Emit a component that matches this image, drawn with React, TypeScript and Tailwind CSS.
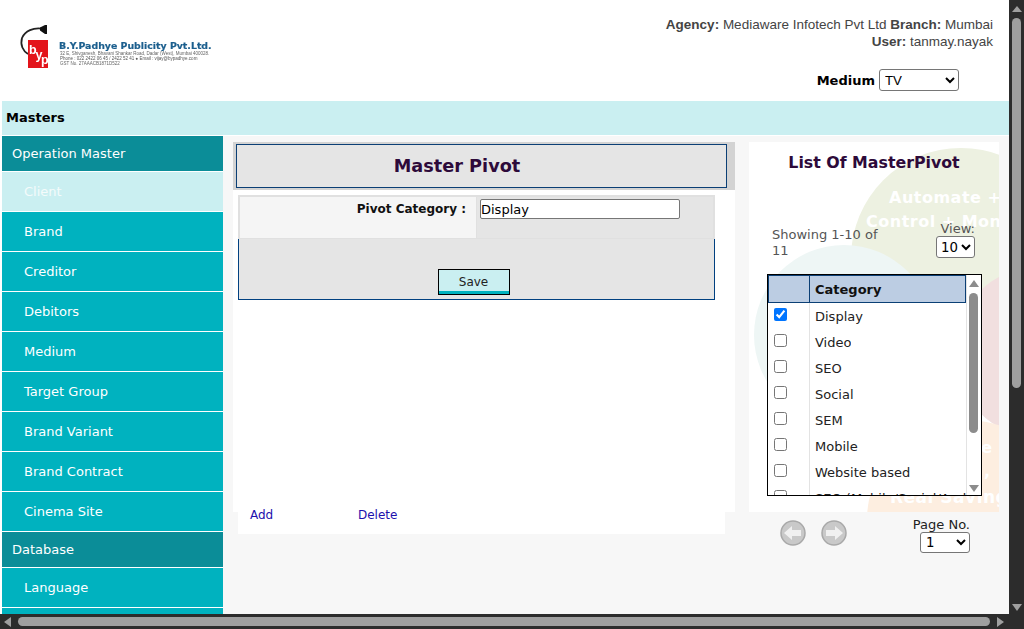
import React from 'react';

const verdana = '[font-family:Verdana,"DejaVu_Sans",sans-serif]';

const operationItems = [
  'Brand',
  'Creditor',
  'Debitors',
  'Medium',
  'Target Group',
  'Brand Variant',
  'Brand Contract',
  'Cinema Site',
];

const categories = ['Display', 'Video', 'SEO', 'Social', 'SEM', 'Mobile', 'Website based', 'SEO (Mobile/Social/Android)'];

const Logo = () => (
  <svg width="194" height="56" viewBox="0 0 194 56" className="block blur-[0.4px]">
    <path d="M25 5 C14 3 6 7 3 14 C1 21 4 27 9 30" fill="none" stroke="#222" strokeWidth="1.8" />
    <path d="M21 3.5 L26 1 L28 1 L28 10 L26 10 L21 6.5 Z" fill="#111" />
    <rect x="9" y="16" width="20" height="28" fill="#e3141b" />
    <text fontSize="12.5" fontWeight="700" fill="#fff" fontFamily="Liberation Sans">
      <tspan x="10" y="30">b</tspan>
      <tspan x="16.5" y="35">y</tspan>
      <tspan x="22" y="40">p</tspan>
    </text>
    <text x="40" y="25" fontSize="9.4" fontWeight="700" fill="#1c5f8e" stroke="#1c5f8e" strokeWidth="0.2" fontFamily="DejaVu Sans">B.Y.Padhye Publicity Pvt.Ltd.</text>
    <text x="41" y="31" fontSize="4.5" fill="#666" fontFamily="Liberation Sans">32 E, Shivganesh, Bhavani Shankar Road, Dadar (West), Mumbai 400028.</text>
    <text x="41" y="36" fontSize="4.5" fill="#555" fontFamily="Liberation Sans">Phone : 022 2422 06 45 / 2422 52 41 ● Email : vijay@bypadhye.com</text>
    <text x="41" y="41" fontSize="4.5" fill="#666" fontFamily="Liberation Sans">GST No. 27AAACB1871D522</text>
  </svg>
);

const NavButton = ({ dir }: { dir: 'left' | 'right' }) => (
  <svg width="26" height="26" viewBox="0 0 26 26">
    <circle cx="13" cy="13" r="12" fill="#c9c9c9" stroke="#a9a9a9" strokeWidth="1.5" />
    <path
      d={dir === 'left' ? 'M4 13 L12 6 V10 H21 V16 H12 V20 Z' : 'M22 13 L14 6 V10 H5 V16 H14 V20 Z'}
      fill="#f0f0f0"
    />
  </svg>
);

export default function App() {
  return (
    <div className="flex h-[629px] w-[1024px] flex-col overflow-hidden bg-[#2c2c2c]">
      <div className="flex h-[614px] w-[1024px]">
        <div className={`h-[614px] w-[1009px] overflow-hidden bg-white pl-[2px] text-[13px] ${verdana}`}>
          {/* header */}
          <div className="flex h-[101px]">
            <div className="pl-[17px] pt-[24px]">
              <Logo />
            </div>
            <div className="ml-auto pr-[16px] pt-[16px] text-right [font-family:'Liberation_Sans',Arial,sans-serif] text-[13.5px] leading-[17px] text-[#444]">
              <div>
                <b>Agency:</b> Mediaware Infotech Pvt Ltd <b>Branch:</b> Mumbai
              </div>
              <div>
                <b>User:</b> tanmay.nayak
              </div>
              <div className="mt-[19px] mr-[34px] flex items-center justify-end gap-[4px]">
                <span className={`text-[13px] font-bold text-black ${verdana}`}>Medium</span>
                <select className="h-[22px] w-[80px] rounded-[3px] border border-[#767676] bg-white pl-[1px] text-[13.3px] leading-none text-black" defaultValue="TV">
                  <option>TV</option>
                </select>
              </div>
            </div>
          </div>

          <div className="flex h-[34px] items-center bg-[#caeff1] pl-[4px] font-bold text-black">Masters</div>

          <div className="mt-[1px] flex h-[478px]">
            {/* sidebar */}
            <div className="w-[221px] shrink-0 text-[13px] text-white">
              <div className="flex h-[36px] items-center border-b border-white bg-[#0b8d98] pl-[10px]">Operation Master</div>
              <div className="flex h-[40px] items-center border-b border-white bg-[#caeff1] pl-[22px] font-normal text-[#f4fbfb]">Client</div>
              {operationItems.map((item) => (
                <div key={item} className="flex h-[40px] items-center border-b border-white bg-[#00b2bf] pl-[22px]">
                  {item}
                </div>
              ))}
              <div className="flex h-[36px] items-center border-b border-white bg-[#0b8d98] pl-[10px]">Database</div>
              <div className="flex h-[40px] items-center border-b border-white bg-[#00b2bf] pl-[22px]">Language</div>
              <div className="h-[40px] bg-[#00b2bf]" />
            </div>

            {/* content */}
            <div className="flex min-w-0 flex-1 bg-[#f7f7f7] pt-[6px]">
              <div className="ml-[10px] w-[502px] shrink-0">
                <div className="flex h-[48px] items-start bg-[#d3d3d3] pl-[3px] pt-[2px]">
                  <div className="flex h-[44px] w-[491px] items-center justify-center border border-[#0b3f75] bg-[#e5e5e5] pr-[49px] text-[17.7px] font-bold text-[#2d0a3a]">
                    Master Pivot
                  </div>
                </div>
                <div className="h-[322px] bg-white pl-[5px] pt-[5px]">
                  <div className="w-[477px]">
                    <div className="flex h-[44px] border-x-2 border-y-2 border-b-[1px] border-[#e0e0e0] border-r-0">
                      <div className="w-[236px] bg-[#f5f5f5] pr-[10px] pt-[4px] text-right text-[12px] font-bold leading-[16px] text-[#111]">Pivot Category :</div>
                      <div className="flex-1 border-l border-r-2 border-[#e0e0e0] bg-[#e5e5e5] pl-[3px] pt-[2px]">
                        <input
                          readOnly
                          value="Display"
                          className="h-[20px] w-[200px] rounded-[2px] border border-[#767676] bg-white text-[13px] text-black outline-none"
                        />
                      </div>
                    </div>
                    <div className="flex h-[61px] items-end justify-center border border-t-0 border-[#004080] bg-[#e5e5e5] pb-[4px] pr-[6px]">
                      <button className="h-[26px] w-[72px] border border-black bg-[#caeff1] pb-[1px] text-[12px] leading-[20px] text-[#222] shadow-[inset_0_-3px_0_#00b2bf]">
                        Save
                      </button>
                    </div>
                  </div>
                </div>
                <div className="ml-[5px] flex h-[22px] w-[487px] items-start bg-white text-[12px] text-[#1c10ad]">
                  <div className="-mt-[5px] flex h-[16px] items-center">
                    <a className="ml-[12px] w-[108px]">Add</a>
                    <a>Delete</a>
                  </div>
                </div>
              </div>

              {/* list panel */}
              <div className="ml-[14px] w-[250px] shrink-0">
                <div className="relative h-[370px] overflow-hidden bg-white">
                  <div className="absolute left-[102px] top-[6px] h-[220px] w-[220px] rounded-full bg-[#edf1e1]" />
                  <div className="absolute left-[5px] top-[103px] h-[180px] w-[180px] rounded-full bg-[#eef6f5]" />
                  <div className="absolute left-[205px] top-[125px] h-[170px] w-[170px] rounded-full bg-[#f1dfdf]" />
                  <div className="absolute left-[118px] top-[278px] h-[200px] w-[200px] rounded-full bg-[#fdeee0]" />
                  <div className="absolute left-[140px] top-[44px] whitespace-nowrap text-[16px] font-bold leading-[24px] tracking-[0.5px] text-white">Automate +</div>
                  <div className="absolute left-[117px] top-[68px] whitespace-nowrap text-[16px] font-bold leading-[24px] tracking-[0.5px] text-white">Control + Monitor</div>
                  <div className="absolute right-[7px] top-[294px] text-[16px] font-bold leading-[24px] text-white">e</div>
                  <div className="absolute right-[9px] top-[318px] text-[16px] font-bold leading-[24px] text-white">,</div>
                  <div className="absolute left-[141px] top-[343px] whitespace-nowrap text-[17px] font-bold leading-[24px] tracking-[0.5px] text-white">Real Saving</div>

                  <div className="relative">
                    <div className="pt-[10px] text-center text-[15.8px] font-bold leading-[22px] text-[#2d0a3a]">List Of MasterPivot</div>
                    <div className="mt-[30px] flex h-[58px] pl-[23px] text-[13px] leading-[16px] text-[#555]">
                      <div className="mt-[23px] w-[120px]">Showing 1-10 of 11</div>
                      <div className="ml-[43px] mt-[18px] flex w-[40px] flex-col items-end">
                        <span className="leading-[13px]">View:</span>
                        <select className="mt-[1px] h-[22px] w-[39px] rounded-[3px] border border-[#767676] bg-white text-[13.3px] text-black" defaultValue="10">
                          <option>10</option>
                        </select>
                      </div>
                    </div>
                    <div className="ml-[18px] mt-[12px] flex h-[222px] w-[215px] overflow-hidden border border-black bg-white">
                      <div className="h-full w-[198px] shrink-0">
                        <div className="flex h-[28px] border border-[#0b3f75] bg-[#bccde3] font-bold text-[#111]">
                          <div className="w-[41px] border-r border-[#0b3f75]" />
                          <div className="flex items-center pl-[5px] pt-[1px]">Category</div>
                        </div>
                        {categories.map((category, index) => (
                          <div key={category} className="flex h-[26px]">
                            <div className="w-[42px] shrink-0 border-r border-[#e3e3e3] pl-[6px] pt-[5px]">
                              <input type="checkbox" readOnly checked={index === 0} className="block h-[13px] w-[13px]" />
                            </div>
                            <div className="flex items-center overflow-hidden whitespace-nowrap pl-[5px] pt-[2px] text-[13px] text-[#222]">{category}</div>
                          </div>
                        ))}
                      </div>
                      <div className="flex h-full w-[15px] flex-col items-center border-l border-[#e3e3e3] pr-[1px] pt-[5px]">
                        <div className="h-0 w-0 border-x-[5px] border-b-[7px] border-x-transparent border-b-[#8c8c8c]" />
                        <div className="mt-[6px] h-[140px] w-[9px] rounded-full bg-[#8c8c8c]" />
                        <div className="mt-auto mb-[3px] h-0 w-0 border-x-[5px] border-t-[7px] border-x-transparent border-t-[#8c8c8c]" />
                      </div>
                    </div>
                  </div>
                </div>
                <div className="flex pl-[31px] pt-[5px] text-[13px] text-[#222]">
                  <div className="flex gap-[15px] pt-[3px]">
                    <NavButton dir="left" />
                    <NavButton dir="right" />
                  </div>
                  <div className="ml-[65px] flex w-[58px] flex-col items-end leading-[15px]">
                    <span>Page No.</span>
                    <select className="h-[21px] w-[50px] rounded-[3px] border border-[#767676] bg-white pl-[1px] text-[13.3px] text-black" defaultValue="1">
                      <option>1</option>
                    </select>
                  </div>
                </div>
              </div>
            </div>
          </div>
        </div>

        {/* vertical scrollbar */}
        <div className="flex h-[614px] w-[15px] flex-col items-center pt-[6px]">
          <div className="h-0 w-0 border-x-[5px] border-b-[6px] border-x-transparent border-b-[#9f9f9f]" />
          <div className="mt-[6px] h-[370px] w-[9px] rounded-full bg-[#9f9f9f]" />
          <div className="mt-auto mb-[3px] h-0 w-0 border-x-[5px] border-t-[7px] border-x-transparent border-t-[#9f9f9f]" />
        </div>
      </div>

      {/* horizontal scrollbar */}
      <div className="flex h-[15px] w-[1024px] items-center pl-[4px]">
        <div className="h-0 w-0 border-y-[5px] border-r-[7px] border-y-transparent border-r-[#9f9f9f]" />
        <div className="ml-[7px] h-[9px] w-[972px] rounded-full bg-[#9f9f9f]" />
        <div className="ml-[7px] h-0 w-0 border-y-[5px] border-l-[7px] border-y-transparent border-l-[#9f9f9f]" />
      </div>
    </div>
  );
}
